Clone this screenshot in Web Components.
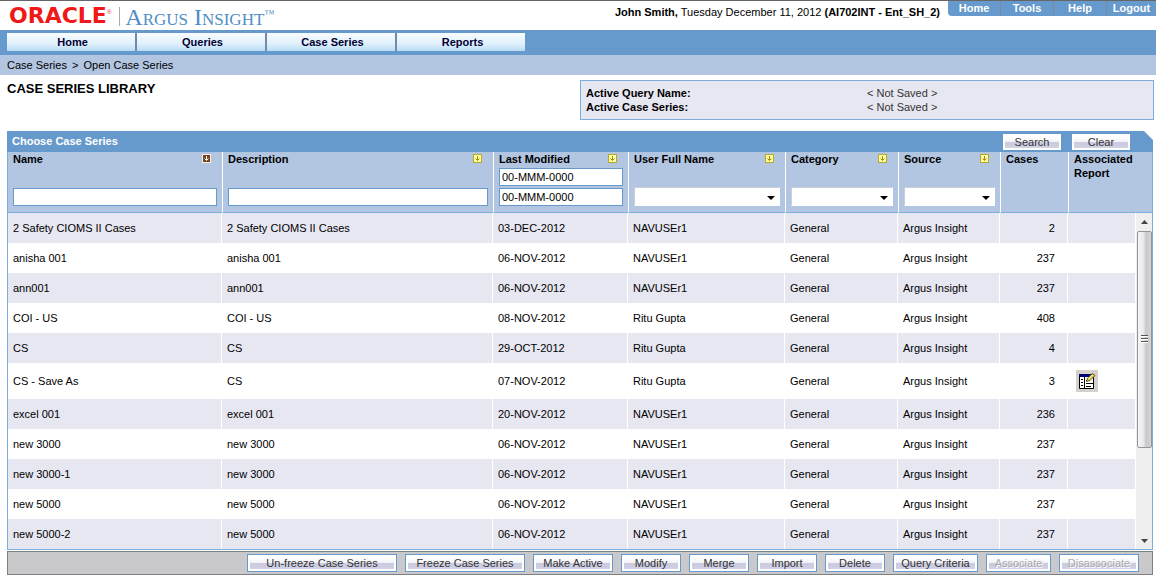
<!DOCTYPE html>
<html lang="en">
<head>
<meta charset="utf-8">
<title>Argus Insight - Case Series Library</title>
<style>
  :root {
    --blue: #6699cc;
    --pale: #b3c6e1;
    --shade: #e7e7f2;
    --line: #7ab0e0;
  }
  body { margin: 0; background: #fff; color: #000; font: 11px/14px "Liberation Sans", Arial, sans-serif; }
</style>
</head>
<body>
<argus-app></argus-app>

<script>
const define = (name, html, setup) => {
  const template = document.createElement('template');
  template.innerHTML = html;
  customElements.define(name, class extends HTMLElement {
    constructor() {
      super();
      this.attachShadow({ mode: 'open' }).append(template.content.cloneNode(true));
    }
    connectedCallback() { if (setup) setup(this, this.shadowRoot); }
  });
};

define('brand-logo', `
  <style>
    :host { display: flex; align-items: center; height: 30px; }
    .oracle { color: #f01818; font: bold 22px/30px "DejaVu Sans", sans-serif; }
    sup { font: 6px/6px "Liberation Sans", sans-serif; color: #f01818; align-self: flex-start; padding-top: 8px; }
    .product { color: #4f8dc4; font: 24px/20px "Liberation Serif", serif; font-variant: small-caps; border-left: 1px solid #aaa; padding-left: 5px; margin-left: 8px; height: 19px; }
    .tm { font: 10px/10px "Liberation Serif", serif; color: #4f8dc4; align-self: flex-start; padding-top: 8px; }
  </style>
  <span class="oracle">ORACLE</span><sup>®</sup>
  <span class="product">Argus Insight</span><span class="tm">™</span>`);

define('app-header', `
  <style>
    :host { display: flex; height: 29px; border-top: 1px solid #666; background: #fff; }
    brand-logo { margin-left: 9px; }
    .user { margin: 4px 8px 0 auto; font-size: 11px; white-space: nowrap; }
    nav { display: flex; height: 15px; background: var(--blue); border-bottom-left-radius: 4px; }
    a { width: 52px; height: 15px; color: #fff; font-weight: bold; text-align: center; text-decoration: none; border-left: 1px solid #80889c; }
    a:first-child { border-left: 0; }
    a:last-child { width: 49px; }
  </style>
  <brand-logo></brand-logo>
  <div class="user"><b>John Smith,</b> Tuesday December 11, 2012 <b>(AI702INT - Ent_SH_2)</b></div>
  <nav><a href="#home">Home</a><a href="#tools">Tools</a><a href="#help">Help</a><a href="#logout">Logout</a></nav>`);

define('main-nav', `
  <style>
    :host { display: flex; gap: 2px; box-sizing: border-box; height: 25px; padding: 3px 0 4px 7px; background: var(--blue); }
    a { box-sizing: border-box; width: 128px; padding-left: 3px; color: #000033; font-weight: bold; line-height: 18px; text-align: center; text-decoration: none;
        background: linear-gradient(#f8fcff, #e0f0fc 60%, #b8dcf6); box-shadow: 2px 0 #7488a8; }
    a:last-child { box-shadow: none; }
  </style>
  <a href="#home">Home</a><a href="#queries">Queries</a><a href="#series">Case Series</a><a href="#reports">Reports</a>`);

define('crumb-bar', `
  <style>
    :host { display: block; padding: 0 7px; line-height: 20px; background: var(--pale); }
  </style>
  <slot></slot>`);

define('active-status', `
  <style>
    :host { display: block; box-sizing: border-box; height: 40px; padding: 5px; background: var(--shade); border: 1px solid var(--line); }
    dl { display: grid; grid-template-columns: 281px 1fr; margin: 0; }
    dt { font-weight: bold; } dd { margin: 0; color: #333; }
  </style>
  <dl><dt>Active Query Name:</dt><dd>&lt; Not Saved &gt;</dd><dt>Active Case Series:</dt><dd>&lt; Not Saved &gt;</dd></dl>`);

define('sort-button', `
  <style>
    :host { display: block; width: 9px; height: 9px; --edge: #b8a830; --fill: #ffffa0; --ink: #a08a10; }
    :host([active]) { --edge: #f4efe8; --fill: #74451d; --ink: #fff; }
    button { display: block; width: 9px; height: 9px; padding: 0; border: 0; background: none; }
    svg { display: block; }
  </style>
  <button aria-label="Sort"><svg width="9" height="9" viewBox="0 0 9 9">
    <rect x=".5" y=".5" width="8" height="8" style="fill:var(--fill);stroke:var(--edge)"/>
    <path d="M4.5 2v4M2.5 4.5l2 2 2-2" style="fill:none;stroke:var(--ink)"/></svg></button>`);

define('column-head', `
  <style>
    :host { display: grid; grid-template-rows: 16px auto; height: 60px; box-sizing: border-box; }
    .top { display: flex; justify-content: space-between; align-items: flex-start; line-height: 14px; }
    sort-button { margin: 2px 6px 0 0; }
    .filters { display: flex; flex-direction: column; gap: 2px; justify-content: flex-end; height: 38px; }
  </style>
  <div class="top"><div><slot></slot></div></div>
  <div class="filters"><slot name="filter"></slot></div>`, (host, root) => {
    if (host.hasAttribute('sort')) {
      const s = document.createElement('sort-button');
      s.toggleAttribute('active', host.getAttribute('sort') === 'active');
      root.querySelector('.top').append(s);
    }
  });

define('scroll-rail', `
  <style>
    :host { display: flex; flex-direction: column; box-sizing: border-box; height: 336px; padding-left: 1px; background: #efefef; }
    button { height: 17px; flex: none; padding: 0; border: 0; background: none; display: grid; place-items: center; }
    .track { flex: 1; padding-top: 1px; }
    .thumb { box-sizing: border-box; height: 72%; border: 1px solid #959595; border-radius: 2px; display: grid; place-items: center;
             background: linear-gradient(90deg, #f6f6f6, #e6e6e8 45%, #c8c8cc 60%, #d4d4d8); }
  </style>
  <button aria-label="Scroll up"><svg width="7" height="4"><path d="M0 4L3.500 0 7 4z" fill="#444"/></svg></button>
  <div class="track"><div class="thumb"><svg width="7" height="8"><path d="M0 .5h7M0 3.500h7M0 6.500h7" stroke="#555"/><path d="M0 1.500h7M0 4.500h7M0 7.500h7" stroke="#fff"/></svg></div></div>
  <button aria-label="Scroll down"><svg width="7" height="4"><path d="M0 0L3.500 4 7 0z" fill="#444"/></svg></button>`);

define('report-icon', `
  <style>
    :host { display: block; width: 22px; height: 22px; }
    button { display: block; padding: 0; border: 0; width: 22px; height: 22px; background: #d6d0cc; }
    svg { display: block; }
  </style>
  <button aria-label="Associated report"><svg width="22" height="22" viewBox="0 0 22 22">
    <path d="M3.500 4.500h14v14h-14z" fill="#fff" stroke="#000"/>
    <path d="M3 4h11v3H3z" fill="#00007a"/>
    <path d="M8.500 7v11M10 10.500h3M10 13.500h7M10 16.500h5" stroke="#000"/>
    <path d="M5 9.500h2M5 12.500h2M5 15.500h2" stroke="#000"/>
    <path d="M10.500 11.500l1-3.500 5-4.500 2.500 2-5 5z" fill="#dcc858" stroke="#443c10" stroke-width=".8"/>
    <path d="M12.500 9l4-4" stroke="#fff8a0"/></svg></button>`);

define('push-button', `
  <style>
    :host { display: block; }
    button { display: block; box-sizing: border-box; width: 100%; height: 16px; padding: 0; border: 2px solid #fff; color: #333;
             font: inherit; line-height: 12px; white-space: nowrap; background: linear-gradient(#fff, #f4f4f9 45%, #c9c9df 55%, #d2d2e4); }
    :host([framed]) button { height: 18px; outline: 1px solid var(--blue); outline-offset: -1px; border-width: 3px; }
    button:disabled { color: #aaa; text-shadow: 1px 1px #fff; }
  </style>
  <button><slot></slot></button>`, (host, root) => {
    root.querySelector('button').disabled = host.hasAttribute('disabled');
  });

define('case-grid', `
  <style>
    :host { display: block; }
    header { display: flex; align-items: center; gap: 11px; height: 21px; padding: 0 23px 0 5px; box-sizing: border-box; background: var(--blue); color: #fff;
             clip-path: polygon(0 0, calc(100% - 9px) 0, 100% 9px, 100% 100%, 0 100%); }
    h2 { flex: 1; margin: 0; font-size: 11px; line-height: 13px; }
    push-button { width: 58px; }
    .frame { border: 1px solid var(--line); border-top: 0; }
    table { width: 100%; table-layout: fixed; border-collapse: separate; border-spacing: 0; }
    th { padding: 0 5px; height: 60px; text-align: left; vertical-align: top; background: var(--pale); border-left: 1px solid #fff; border-bottom: 1px solid var(--line); }
    th:first-child { border-left: 0; }
    td { height: 30px; padding: 0 5px; border-right: 1px solid #fff; box-sizing: border-box; }
    tr:nth-child(odd) td { background: var(--shade); }
    tr.tall td { height: 36px; }
    td.num { text-align: right; padding-right: 12px; }
    td.report { padding-left: 8px; }
    tr td.rail { padding: 0; border: 0; background: #efefef; vertical-align: top; }
    input, select { box-sizing: border-box; width: 100%; height: 18px; margin: 0; padding: 0 2px; border: 1px solid var(--blue); border-radius: 0; background: #fff; color: #000; font: inherit; font-weight: normal; }
    select { appearance: none; height: 19px; border-color: #c8cfda #fff #fff #c8cfda;
             background: #fff url("data:image/svg+xml,%3Csvg xmlns='http://www.w3.org/2000/svg' width='8' height='4'%3E%3Cpath d='M0 0h8L4 4z'/%3E%3C/svg%3E") no-repeat right 4px top 8px; }
  </style>
  <header><h2>Choose Case Series</h2><push-button>Search</push-button><push-button>Clear</push-button></header>
  <div class="frame"><table>
    <colgroup><col style="width:214px"><col><col style="width:135px"><col style="width:157px"><col style="width:113px"><col style="width:102px"><col style="width:68px"><col style="width:68px"><col style="width:16px"></colgroup>
    <thead><tr>
      <th><column-head sort="active">Name<input slot="filter" aria-label="Name"></column-head></th>
      <th><column-head sort>Description<input slot="filter" aria-label="Description"></column-head></th>
      <th><column-head sort>Last Modified<input slot="filter" aria-label="Modified from" value="00-MMM-0000"><input slot="filter" aria-label="Modified to" value="00-MMM-0000"></column-head></th>
      <th><column-head sort>User Full Name<select slot="filter" aria-label="User Full Name"></select></column-head></th>
      <th><column-head sort>Category<select slot="filter" aria-label="Category"></select></column-head></th>
      <th><column-head sort>Source<select slot="filter" aria-label="Source"></select></column-head></th>
      <th><column-head>Cases</column-head></th>
      <th colspan="2"><column-head>Associated<br>Report</column-head></th>
    </tr></thead>
    <tbody></tbody>
  </table></div>`, (host, root) => {
    const rows = [
      ['2 Safety CIOMS II Cases', '2 Safety CIOMS II Cases', '03-DEC-2012', 'NAVUSEr1', 2],
      ['anisha 001', 'anisha 001', '06-NOV-2012', 'NAVUSEr1', 237],
      ['ann001', 'ann001', '06-NOV-2012', 'NAVUSEr1', 237],
      ['COI - US', 'COI - US', '08-NOV-2012', 'Ritu Gupta', 408],
      ['CS', 'CS', '29-OCT-2012', 'Ritu Gupta', 4],
      ['CS - Save As', 'CS', '07-NOV-2012', 'Ritu Gupta', 3, true],
      ['excel 001', 'excel 001', '20-NOV-2012', 'NAVUSEr1', 236],
      ['new 3000', 'new 3000', '06-NOV-2012', 'NAVUSEr1', 237],
      ['new 3000-1', 'new 3000', '06-NOV-2012', 'NAVUSEr1', 237],
      ['new 5000', 'new 5000', '06-NOV-2012', 'NAVUSEr1', 237],
      ['new 5000-2', 'new 5000', '06-NOV-2012', 'NAVUSEr1', 237],
    ];
    root.querySelector('tbody').innerHTML = rows.map(([name, desc, date, user, cases, report], i) => `
      <tr class="${report ? 'tall' : ''}"><td>${name}</td><td>${desc}</td><td>${date}</td><td>${user}</td><td>General</td><td>Argus Insight</td>
      <td class="num">${cases}</td><td class="report">${report ? '<report-icon></report-icon>' : ''}</td>
      ${i ? '' : `<td class="rail" rowspan="${rows.length}"><scroll-rail></scroll-rail></td>`}</tr>`).join('');
  });

define('action-bar', `
  <style>
    :host { display: flex; justify-content: flex-end; align-items: center; gap: 8px; box-sizing: border-box; height: 24px; padding-right: 13px; background: #c9c9cb; border: 1px solid #808080; }
    push-button { width: 60px; }
    .xl { width: 150px; } .l { width: 120px; } .m { width: 80px; } .q { width: 85px; } .a { width: 65px; }
  </style>
  <push-button framed class="xl">Un-freeze Case Series</push-button>
  <push-button framed class="l">Freeze Case Series</push-button>
  <push-button framed class="m">Make Active</push-button>
  <push-button framed>Modify</push-button>
  <push-button framed>Merge</push-button>
  <push-button framed>Import</push-button>
  <push-button framed>Delete</push-button>
  <push-button framed class="q">Query Criteria</push-button>
  <push-button framed disabled class="a">Associate</push-button>
  <push-button framed disabled class="m">Disassociate</push-button>`);

define('argus-app', `
  <style>
    :host { display: block; }
    main { padding: 5px 2px 0 7px; }
    .intro { display: grid; grid-template-columns: 1fr 574px; align-items: start; margin-bottom: 11px; }
    h1 { margin: 0; font-size: 13px; line-height: 18px; }
    case-grid, action-bar { margin-right: 1px; }
    action-bar { margin-top: 1px; }
    crumb-bar a { color: #000; text-decoration: none; }
    crumb-bar span { margin: 0 2px; }
  </style>
  <app-header></app-header>
  <main-nav></main-nav>
  <crumb-bar><a href="#series">Case Series</a> <span>&gt;</span> <a href="#open">Open Case Series</a></crumb-bar>
  <main>
    <div class="intro"><h1>CASE SERIES LIBRARY</h1><active-status></active-status></div>
    <case-grid></case-grid>
    <action-bar></action-bar>
  </main>`);
</script>
</body>
</html>
